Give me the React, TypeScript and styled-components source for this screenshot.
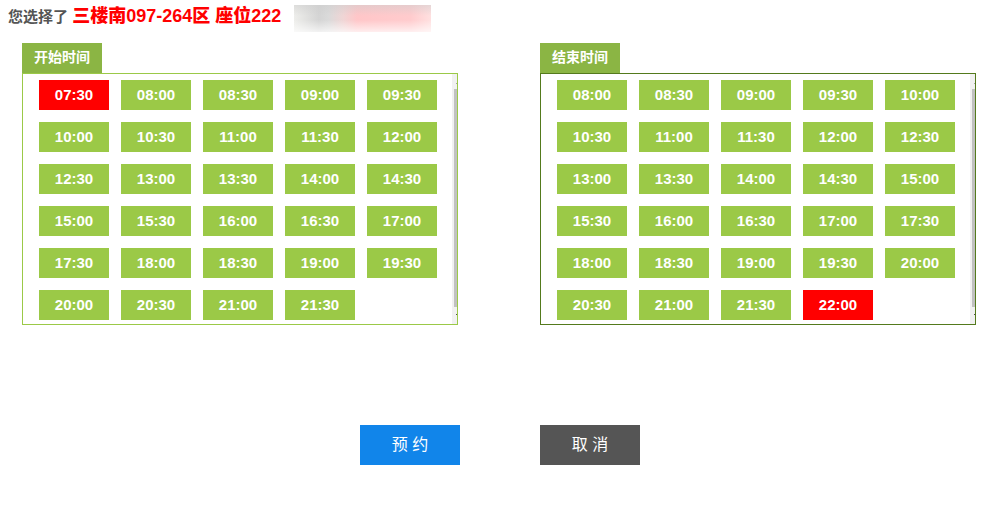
import { useState } from "react";
import styled, { createGlobalStyle } from "styled-components";

const GlobalStyle = createGlobalStyle`
  * { box-sizing: border-box; }
  body {
    margin: 0;
    background: #fff;
    color: #555;
    font-family: "Liberation Sans", "Noto Sans CJK SC", sans-serif;
  }
  button { font-family: inherit; border: 0; padding: 0; cursor: pointer; }
`;

const Header = styled.header`
  display: flex;
  align-items: center;
  gap: 13px;
  height: 32px;
  padding-left: 8px;
`;

const Summary = styled.h1`
  margin: 0;
  font-size: 15px;
  line-height: 32px;
  font-weight: bold;
  white-space: nowrap;
`;

const Seat = styled.strong`
  color: #f00;
  font-size: 18px;
`;

const Redacted = styled.div`
  align-self: flex-end;
  width: 137px;
  height: 27px;
  background:
    linear-gradient(to bottom, rgba(205, 205, 205, 0.5), rgba(255, 255, 255, 0) 40%, rgba(255, 255, 255, 0) 55%, rgba(255, 255, 255, 0.7)),
    linear-gradient(to right, #eeeeeb, #d4d4d4 18%, #dadada 25%, #f0d5d5 36%, #ffc6c8 46%, #ffcbcd 85%, #ffe0e0);
`;

const Pickers = styled.main`
  display: grid;
  grid-template-columns: 1fr 1fr;
  gap: 82px;
  padding: 11px 17px 0 22px;
`;

const Caption = styled.h2`
  width: fit-content;
  margin: 0;
  padding: 0 12px 2px;
  background: #8bb544;
  color: #fff;
  font-size: 14px;
  line-height: 28px;
  font-weight: bold;
`;

const Panel = styled.div<{ $edge: string }>`
  display: flex;
  justify-content: space-between;
  border: 1px solid ${(p) => p.$edge};
`;

const Slots = styled.div`
  flex: 1;
  display: grid;
  grid-template-columns: repeat(auto-fill, 70px);
  gap: 12px;
  padding: 6px 0 4px 16px;
`;

const Slot = styled.button<{ $selected: boolean }>`
  height: 30px;
  padding-bottom: 2px;
  background: ${(p) => (p.$selected ? "#f00" : "#9bc947")};
  color: #fff;
  font-size: 15px;
  font-weight: bold;
`;

const Track = styled.div`
  display: flex;
  flex-direction: column;
  align-items: flex-end;
  width: 5px;
  background: #f1f1f1;
`;

const Thumb = styled.div`
  flex: 1;
  width: 3px;
  background: #c1c1c1;
`;

const ArrowBox = styled.div<{ $height: number; $top: number; $ink: string }>`
  height: ${(p) => p.$height}px;
  padding-top: ${(p) => p.$top}px;
  &::after {
    content: "";
    display: block;
    width: 1px;
    height: 1px;
    background: ${(p) => p.$ink};
  }
`;

const Actions = styled.footer`
  display: flex;
  justify-content: center;
  gap: 80px;
  padding: 100px 17px 0 24px;
`;

const Action = styled.button<{ $fill: string }>`
  width: 100px;
  height: 40px;
  padding-bottom: 4px;
  background: ${(p) => p.$fill};
  color: #fff;
  font-size: 16px;
`;

function halfHours(from: number, to: number): string[] {
  const out: string[] = [];
  for (let m = from; m <= to; m += 30) {
    out.push(`${String(Math.floor(m / 60)).padStart(2, "0")}:${m % 60 ? "30" : "00"}`);
  }
  return out;
}

interface PickerProps {
  title: string;
  times: string[];
  initial: string;
  edge: string;
}

function TimePicker({ title, times, initial, edge }: PickerProps) {
  const [value, setValue] = useState(initial);
  return (
    <section aria-label={title}>
      <Caption>{title}</Caption>
      <Panel $edge={edge}>
        <Slots>
          {times.map((t) => (
            <Slot key={t} type="button" $selected={t === value} aria-pressed={t === value} onClick={() => setValue(t)}>
              {t}
            </Slot>
          ))}
        </Slots>
        <Track aria-hidden="true">
          <ArrowBox $height={15} $top={9} $ink="#a3a3a3" />
          <Thumb />
          <ArrowBox $height={17} $top={7} $ink="#505050" />
        </Track>
      </Panel>
    </section>
  );
}

export default function App() {
  return (
    <>
      <GlobalStyle />
      <Header>
        <Summary>
          您选择了 <Seat>三楼南097-264区 座位222</Seat>
        </Summary>
        <Redacted />
      </Header>
      <Pickers>
        <TimePicker title="开始时间" times={halfHours(450, 1290)} initial="07:30" edge="#9bc947" />
        <TimePicker title="结束时间" times={halfHours(480, 1320)} initial="22:00" edge="#547a1d" />
      </Pickers>
      <Actions>
        <Action type="button" $fill="#1185ea">预 约</Action>
        <Action type="button" $fill="#555">取 消</Action>
      </Actions>
    </>
  );
}
